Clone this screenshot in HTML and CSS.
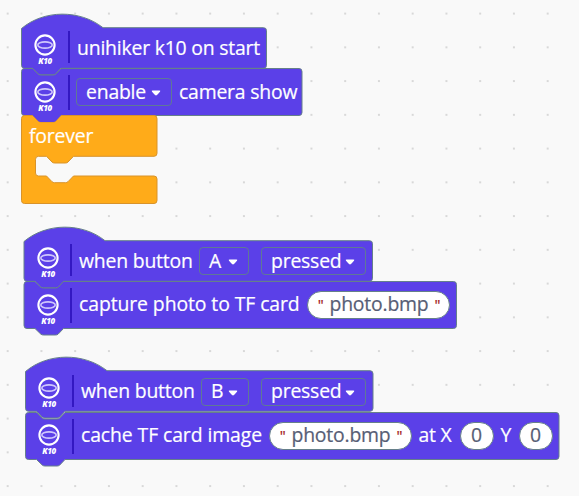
FILE: index.html
```
<!DOCTYPE html>
<html lang="en">
<head>
<meta charset="utf-8">
<title>Blocks</title>
<link rel="stylesheet" href="styles.css">
</head>
<body>
<svg class="defs" aria-hidden="true">
  <symbol id="board" viewBox="0 0 24 24">
    <circle cx="12" cy="12" r="9.6" fill="none" stroke="#fff" stroke-width="2.1"/>
    <ellipse cx="12" cy="12" rx="7.2" ry="3.1" fill="none" stroke="#cfc6fc" stroke-width="1.6"/>
  </symbol>
  <symbol id="caret" viewBox="0 0 10 6">
    <path d="M1.6 .5H8.4Q9.8 .6 9 1.7L6 5.1Q5 6 4 5.1L1 1.7Q.2 .6 1.6 .5Z" fill="#fff"/>
  </symbol>
</svg>
<main class="workspace">
  <section class="stack stack-start">
    <div class="block hat">
      <svg class="shape" width="250" height="64"><path d="M.5 18V14.5C23-4.5 59-4.5 82 13.7H242.500Q245.500 13.7 245.500 16.7V51.3Q245.500 54.3 242.500 54.3H40L34.500 60.300Q33.500 61 32 61H20Q18.500 61 17.500 60.300L11.500 54.300H3.500Q.5 54.300 .5 51.300Z"/></svg>
      <div class="icon"><svg width="24" height="24"><use href="#board"/></svg><b>K10</b></div>
      <i class="rule"></i>
      <span class="label">unihiker k10 on start</span>
    </div>
    <div class="block">
      <svg class="shape" width="290" height="64"><path d="M.5 3.500Q.5 .5 3.500 .5H11.500L17.500 6.300Q18.500 7 20 7H32Q33.500 7 34.500 6.300L40 .5H278Q281 .5 281 3.500V44.500Q281 47.500 278 47.500H40L34.500 53.300Q33.500 54 32 54H20Q18.500 54 17.500 53.300L11.500 47.500H3.500Q.5 47.500 .5 44.500Z"/></svg>
      <div class="icon"><svg width="24" height="24"><use href="#board"/></svg><b>K10</b></div>
      <i class="rule"></i>
      <span class="field f-enable"><span>enable</span><svg class="caret"><use href="#caret"/></svg></span>
      <span class="label after">camera show</span>
    </div>
    <div class="block loop">
      <svg class="shape" width="140" height="92"><path d="M.5 3.500Q.5 .5 3.500 .5H11.500L17.500 6.300Q18.500 7 20 7H32Q33.500 7 34.500 6.300L40 .5H133Q136 .5 136 3.500V38.300Q136 41.300 133 41.300H52.500L47 47Q46 48 44.500 48H33.500Q32 48 31 47L25.500 41.300H17.500Q14.500 41.300 14.500 44.300V58Q14.500 61 17.500 61H25.500L31 66.700Q32 67.700 33.500 67.700H44.500Q46 67.700 47 66.700L52.500 61H133Q136 61 136 64V85.500Q136 88.500 133 88.500H3.500Q.5 88.500 .5 85.500Z"/><path class="tab" d="M11.500 0L17.500 6.300Q18.500 7 20 7H32Q33.500 7 34.500 6.300L40 0Z"/></svg>
      <span class="label">forever</span>
    </div>
  </section>

  <section class="stack stack-a">
    <div class="block hat">
      <svg class="shape" width="360" height="64"><path d="M0 18V14.500C22.500-4.500 58.500-4.500 81 13.700H345.500Q348.500 13.700 348.500 16.700V51.300Q348.500 54.300 345.500 54.300H39.500L34 60.300Q33 61 31.500 61H19.500Q18 61 17 60.300L11 54.300H3Q0 54.300 0 51.300Z"/></svg>
      <div class="icon"><svg width="24" height="24"><use href="#board"/></svg><b>K10</b></div>
      <i class="rule"></i>
      <span class="label w-when">when button</span>
      <span class="field f-a"><span>A</span><svg class="caret"><use href="#caret"/></svg></span>
      <span class="field f-pressed"><span>pressed</span><svg class="caret"><use href="#caret"/></svg></span>
    </div>
    <div class="block raised">
      <svg class="shape" width="440" height="64"><path d="M0 3.500Q0 .5 3 .5H11L17 6.300Q18 7 19.500 7H31.500Q33 7 34 6.300L39.500 .5H429.500Q432.500 .5 432.500 3.500V44.500Q432.500 47.500 429.500 47.500H39.500L34 53.300Q33 54 31.500 54H19.500Q18 54 17 53.300L11 47.500H3Q0 47.500 0 44.500Z"/></svg>
      <div class="icon"><svg width="24" height="24"><use href="#board"/></svg><b>K10</b></div>
      <i class="rule"></i>
      <span class="label w-capture">capture photo to TF card</span>
      <span class="pill text"><q>"</q><span>photo.bmp</span><q>"</q></span>
    </div>
  </section>

  <section class="stack stack-b">
    <div class="block hat raised">
      <svg class="shape" width="360" height="64"><path d="M.5 18V14.500C23-4.500 59-4.500 82 13.700H345Q348 13.700 348 16.700V51.300Q348 54.300 345 54.300H40L34.500 60.300Q33.500 61 32 61H20Q18.500 61 17.500 60.300L11.500 54.300H3.500Q.5 54.300 .5 51.300Z"/></svg>
      <div class="icon"><svg width="24" height="24"><use href="#board"/></svg><b>K10</b></div>
      <i class="rule"></i>
      <span class="label w-when">when button</span>
      <span class="field f-b"><span>B</span><svg class="caret"><use href="#caret"/></svg></span>
      <span class="field f-pressed"><span>pressed</span><svg class="caret"><use href="#caret"/></svg></span>
    </div>
    <div class="block raised">
      <svg class="shape" width="540" height="64"><path d="M.5 3.500Q.5 .5 3.500 .5H11.500L17.500 6.300Q18.500 7 20 7H32Q33.500 7 34.500 6.300L40 .5H531Q534 .5 534 3.500V44.500Q534 47.500 531 47.500H40L34.500 53.300Q33.500 54 32 54H20Q18.500 54 17.500 53.300L11.500 47.500H3.500Q.5 47.500 .5 44.500Z"/></svg>
      <div class="icon"><svg width="24" height="24"><use href="#board"/></svg><b>K10</b></div>
      <i class="rule"></i>
      <span class="label w-cache">cache TF card image</span>
      <span class="pill text"><q>"</q><span>photo.bmp</span><q>"</q></span>
      <span class="label after w-x">at X</span>
      <span class="pill num">0</span>
      <span class="label after w-y">Y</span>
      <span class="pill num">0</span>
    </div>
  </section>
</main>
</body>
</html>
```
FILE: styles.css
```
* { box-sizing: border-box; }
body {
  margin: 0;
  background-color: #f9f9f9;
  font-family: "Open Sans", "Noto Sans", sans-serif;
  font-size: 19.4px;
  letter-spacing: -0.2px;
  color: #fff;
}
.defs { position: absolute; width: 0; height: 0; }
.workspace {
  position: relative;
  width: 579px;
  height: 496px;
  overflow: hidden;
  background-image: radial-gradient(circle, #d8d8d8 0.7px, transparent 1.4px);
  background-size: 33.75px 33.75px;
  background-position: -9.2px -3.3px;
}
.stack { position: absolute; }
.stack-start { left: 21px; top: 14px; }
.stack-a { left: 24px; top: 227px; }
.stack-b { left: 25px; top: 357px; }
.block {
  position: relative;
  display: flex;
  align-items: flex-start;
  height: 47px;
  padding-top: 10px;
  white-space: nowrap;
}
.block.hat { height: 54px; padding-top: 20px; }
.stack-b .hat { height: 54.5px; padding-top: 21px; }
.stack-b .hat .shape { top: 0.3px; }
.block.loop { height: 89px; padding: 7px 0 0 8px; }
.shape {
  position: absolute;
  left: 0;
  top: 0;
  overflow: visible;
  fill: #5b40e8;
  stroke: #66808a;
  stroke-width: 1;
}
.loop .shape { fill: #ffab19; stroke: #d9932a; }
.loop .tab { fill: #5b40e8; stroke: none; }
.block > :not(.shape) { position: relative; flex: none; }
.icon {
  width: 24px;
  height: 36px;
  margin: 1.5px 0 0 12px;
  display: flex;
  flex-direction: column;
  align-items: center;
}
.hat .icon { margin-top: -1.5px; }
.stack-b .hat .icon { margin-top: -2.500px; }
.icon svg { flex: none; }
.icon b { font-size: 8px; letter-spacing: -0.3px; font-style: italic; font-weight: 800; line-height: 10px; margin-top: -1px; }
.rule { width: 2px; height: 35px; margin: -3px 7px 0 11px; background: #3318c2; }
.hat .rule { height: 32px; }
.stack-a .rule { margin-left: 10px; margin-right: 7px; }
.label, .field span, .pill { -webkit-text-stroke: 0.2px; }
.label { line-height: 28px; }
.raised .label { line-height: 26px; }
.after { margin-left: 7px; }
.field {
  display: flex;
  align-items: center;
  justify-content: space-between;
  height: 28px;
  border: 1px solid #5f7896;
  border-radius: 4px;
  padding: 0 10px 0 9px;
  line-height: 26px;
}
.raised .field span { line-height: 24px; padding-bottom: 2px; }
.caret { width: 10px; height: 6px; margin-top: 1px; }
.pill {
  display: flex;
  align-items: center;
  justify-content: center;
  height: 28px;
  padding-bottom: 2px;
  border: 1px solid #66808a;
  border-radius: 14px;
  background: #fff;
  color: #575e75;
  line-height: 24px;
}
.pill.text { width: 143px; gap: 6px; padding-left: 2px; }
.pill.num { width: 34px; }
q { quotes: none; color: #a31515; font-size: 15px; font-weight: 500; }
q::before, q::after { content: none; }
.f-enable { width: 96px; margin-left: -1px; }
.f-a { width: 50px; }
.f-b { width: 48px; }
.f-pressed { width: 105px; margin-left: 12px; }
.w-when { width: 120px; }
.w-capture { width: 227.5px; letter-spacing: -0.09px; }
.w-cache { width: 187.5px; letter-spacing: -0.1px; }
.w-x { width: 41px; }
.w-y { width: 18px; }
```
